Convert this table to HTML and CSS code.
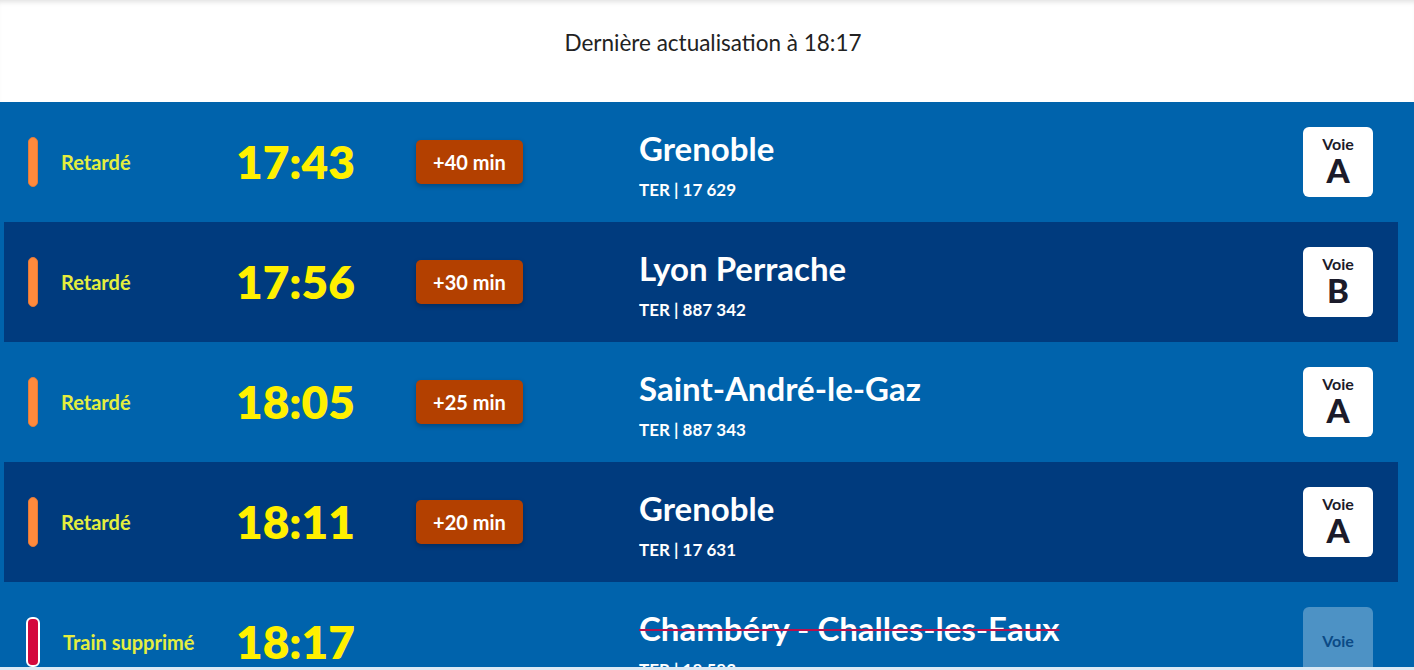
FILE: index.html
```html
<!DOCTYPE html>
<html lang="fr">
<head>
<meta charset="utf-8">
<title>Départs</title>
<link rel="stylesheet" href="styles.css">
</head>
<body>
<header class="top">
  <p class="updated">Dernière actualisation à 18:17</p>
</header>
<main class="board">
  <div class="row">
    <div class="status"><span class="pill pill-late"></span><span class="status-text">Retardé</span></div>
    <div class="time">17:43</div>
    <div class="delay-cell"><span class="delay">+40 min</span></div>
    <div class="dest"><div class="dest-name">Grenoble</div><div class="dest-sub">TER | 17 629</div></div>
    <div class="voie"><span class="voie-label">Voie</span><span class="voie-letter">A</span></div>
  </div>
  <div class="row row-dark">
    <div class="status"><span class="pill pill-late"></span><span class="status-text">Retardé</span></div>
    <div class="time">17:56</div>
    <div class="delay-cell"><span class="delay">+30 min</span></div>
    <div class="dest"><div class="dest-name">Lyon Perrache</div><div class="dest-sub">TER | 887 342</div></div>
    <div class="voie"><span class="voie-label">Voie</span><span class="voie-letter">B</span></div>
  </div>
  <div class="row">
    <div class="status"><span class="pill pill-late"></span><span class="status-text">Retardé</span></div>
    <div class="time">18:05</div>
    <div class="delay-cell"><span class="delay">+25 min</span></div>
    <div class="dest"><div class="dest-name">Saint-André-le-Gaz</div><div class="dest-sub">TER | 887 343</div></div>
    <div class="voie"><span class="voie-label">Voie</span><span class="voie-letter">A</span></div>
  </div>
  <div class="row row-dark">
    <div class="status"><span class="pill pill-late"></span><span class="status-text">Retardé</span></div>
    <div class="time">18:11</div>
    <div class="delay-cell"><span class="delay">+20 min</span></div>
    <div class="dest"><div class="dest-name">Grenoble</div><div class="dest-sub">TER | 17 631</div></div>
    <div class="voie"><span class="voie-label">Voie</span><span class="voie-letter">A</span></div>
  </div>
  <div class="row">
    <div class="status"><span class="pill pill-cancel"></span><span class="status-text">Train supprimé</span></div>
    <div class="time">18:17</div>
    <div class="delay-cell"></div>
    <div class="dest"><div class="dest-name dest-cancel">Chambéry - Challes-les-Eaux</div><div class="dest-sub">TER | 18 583</div></div>
    <div class="voie voie-off"><span class="voie-label">Voie</span></div>
  </div>
</main>
<div class="edge"></div>
</body>
</html>
```
FILE: styles.css
```css
html, body {
  margin: 0;
  padding: 0;
  height: 100%;
  overflow: hidden;
}
body {
  font-family: "Lato", "Open Sans", sans-serif;
  background: #0063ac;
}
.top {
  background: #fff;
  height: 102px;
  padding-left: 12px;
  box-sizing: border-box;
  display: flex;
  align-items: center;
  justify-content: center;
  box-shadow: inset 0 5px 5px -3px rgba(0, 0, 0, 0.12);
}
.updated {
  margin: 0 0 17px;
  font-size: 22.5px;
  font-weight: 400;
  color: #222;
}
.board {
  background: #0063ac;
  display: flex;
  flex-direction: column;
}
.row {
  height: 120px;
  margin: 0 16px 0 4px;
  padding: 0 25px 0 24px;
  display: grid;
  grid-template-columns: 210px 178px 223px 1fr 70px;
  align-items: center;
}
.row-dark {
  background: #003b7e;
}
.status {
  display: flex;
  align-items: center;
  gap: 23px;
}
.pill {
  width: 10px;
  height: 50px;
  border-radius: 6px;
  box-sizing: border-box;
  flex: none;
}
.pill-late {
  background: #ff8a3c;
  border: 1px solid #e07a3c;
}
.pill-cancel {
  width: 14px;
  margin-left: -2px;
  background: #d4083c;
  border: 2px solid #fff;
}
.status-text {
  color: #e4ee3f;
  font-size: 20px;
  font-weight: 700;
}
.time {
  color: #fff000;
  font-size: 46px;
  font-weight: 800;
  line-height: 1;
  margin-left: -2px;
}
.delay-cell {
  display: flex;
}
.delay {
  display: flex;
  align-items: center;
  justify-content: center;
  width: 107px;
  height: 44px;
  border-radius: 5px;
  background: #b34000;
  color: #fff;
  font-size: 20px;
  font-weight: 700;
  box-shadow: 0 2px 5px rgba(0, 0, 0, 0.25);
}
.dest {
  color: #fff;
  display: flex;
  flex-direction: column;
  margin-top: 6px;
}
.dest-name {
  font-size: 33px;
  font-weight: 700;
  line-height: 38px;
  white-space: nowrap;
}
.dest-cancel {
  text-decoration: line-through;
  text-decoration-color: #b8104c;
  text-decoration-thickness: 2px;
}
.dest-sub {
  margin-top: 12px;
  font-size: 17px;
  font-weight: 700;
  line-height: 22px;
}
.voie {
  width: 70px;
  height: 70px;
  box-sizing: border-box;
  background: #fff;
  border-radius: 6px;
  display: flex;
  flex-direction: column;
  align-items: center;
  padding-top: 8px;
  color: #1b1b2a;
}
.voie-label {
  font-size: 16px;
  font-weight: 700;
  line-height: 17px;
}
.voie-letter {
  margin-top: 3px;
  font-size: 33px;
  font-weight: 900;
  line-height: 30px;
}
.voie-off {
  background: rgba(255, 255, 255, 0.3);
  color: #0b4a86;
  padding-top: 25px;
}
.edge {
  position: fixed;
  left: 0;
  right: 0;
  bottom: 0;
  height: 3px;
  background: #dbe9f5;
}
```
